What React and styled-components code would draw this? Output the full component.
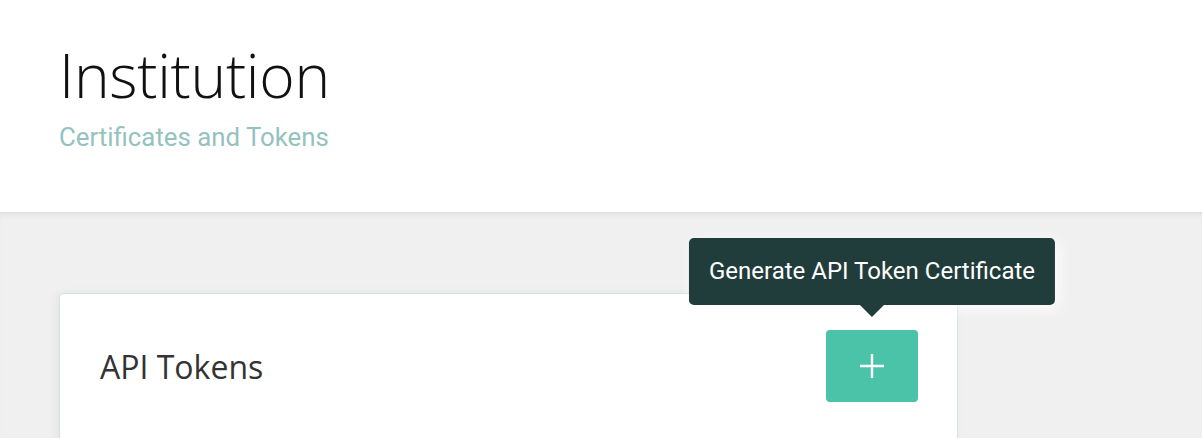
import React from 'react';
import styled, { createGlobalStyle } from 'styled-components';

const GlobalStyle = createGlobalStyle`
  html, body {
    margin: 0;
    padding: 0;
    background: #f0f0f0;
  }
  body {
    font-family: 'Open Sans', sans-serif;
  }
`;

const Header = styled.header`
  height: 212px;
  box-sizing: border-box;
  background: #ffffff;
  padding: 36px 59px 0;
`;

const Title = styled.h1`
  margin: 0;
  font-family: 'Open Sans', sans-serif;
  font-weight: 300;
  font-size: 60.5px;
  line-height: 78px;
  color: #111;
  letter-spacing: -0.3px;
`;

const Subtitle = styled.div`
  margin-top: 7px;
  font-family: Roboto, sans-serif;
  font-size: 25.8px;
  line-height: 32px;
  color: #94c2bf;
`;

const Main = styled.main`
  min-height: 226px;
  padding: 81px 59px 0;
  box-shadow: inset 0 6px 8px -6px rgba(0, 0, 0, 0.12);
`;

const Card = styled.section`
  width: 899px;
  box-sizing: border-box;
  background: #fff;
  border: 1px solid #cde6e2;
  border-radius: 5px;
  box-shadow: -3px 0 10px rgba(0, 0, 0, 0.05);
  min-height: 180px;
`;

const CardHeader = styled.div`
  display: flex;
  align-items: center;
  justify-content: space-between;
  padding: 36px 39px 0 40px;
`;

const CardTitle = styled.h2`
  margin: 0;
  font-family: 'Open Sans', sans-serif;
  font-weight: 400;
  font-size: 32px;
  color: #333;
`;

const ButtonWrap = styled.div`
  position: relative;
`;

const AddButton = styled.button`
  width: 92px;
  height: 72px;
  border: none;
  border-radius: 4px;
  background: #4ac3a8;
  display: flex;
  align-items: center;
  justify-content: center;
  cursor: pointer;
`;

const Tooltip = styled.div`
  position: absolute;
  bottom: calc(100% + 25px);
  left: 50%;
  transform: translateX(-50%);
  white-space: nowrap;
  background: #213d3b;
  color: #fff;
  font-family: Roboto, sans-serif;
  font-size: 24px;
  padding: 0 20px;
  height: 67px;
  line-height: 67px;
  border-radius: 5px;
  box-shadow: 4px 4px 14px rgba(255, 255, 255, 0.9);

  &::after {
    content: '';
    position: absolute;
    top: 100%;
    left: 50%;
    margin-left: -12px;
    border-left: 12px solid transparent;
    border-right: 12px solid transparent;
    border-top: 12px solid #213d3b;
  }
`;

const PlusIcon = () => (
  <svg width="26" height="26" viewBox="0 0 26 26">
    <path d="M13 1v24M1 13h24" stroke="#fff" strokeWidth="2.4" fill="none" />
  </svg>
);

export default function App() {
  return (
    <>
      <GlobalStyle />
      <Header>
        <Title>Institution</Title>
        <Subtitle>Certificates and Tokens</Subtitle>
      </Header>
      <Main>
        <Card>
          <CardHeader>
            <CardTitle>API Tokens</CardTitle>
            <ButtonWrap>
              <Tooltip>Generate API Token Certificate</Tooltip>
              <AddButton aria-label="Generate API Token Certificate">
                <PlusIcon />
              </AddButton>
            </ButtonWrap>
          </CardHeader>
        </Card>
      </Main>
    </>
  );
}
